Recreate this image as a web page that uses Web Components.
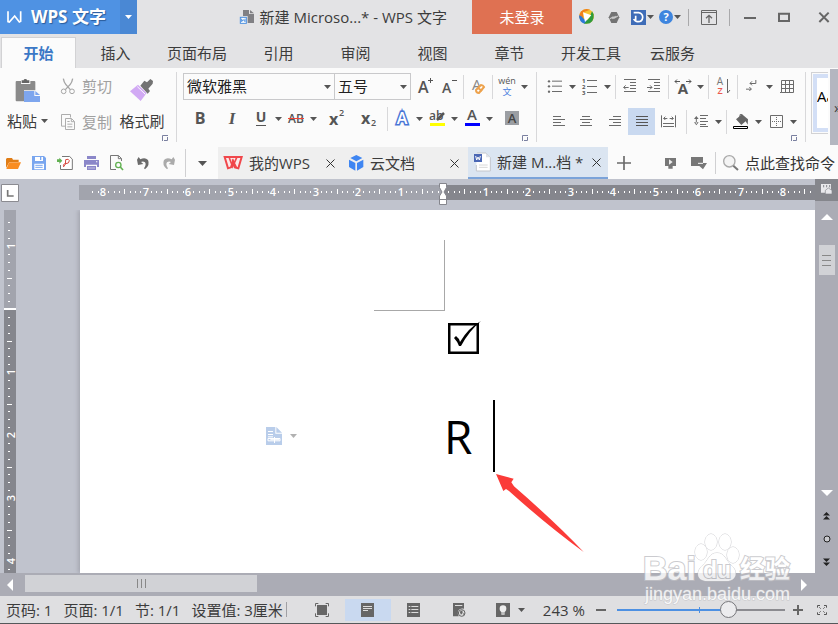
<!DOCTYPE html>
<html lang="zh-CN">
<head>
<meta charset="utf-8">
<title>WPS 文字</title>
<style>
html,body{margin:0;height:100%}
body{font:15px/20px "Open Sans","Noto Sans CJK SC",sans-serif;color:#3c3c3c;overflow:hidden}
</style>
</head>
<body>
<wps-app></wps-app>
<script>
// Shared base: puts a style and a markup string into an open shadow root.
class Base extends HTMLElement{
  constructor(){super();this.attachShadow({mode:'open'})}
  connectedCallback(){this.render()}
  paint(css,html){
    const t=document.createElement('template');
    t.innerHTML=`<style>*{box-sizing:border-box}button{font:inherit;color:inherit;background:none;border:0;padding:0;margin:0}${css}</style>${html}`;
    this.shadowRoot.replaceChildren(t.content.cloneNode(true));
  }
}

// Icons: [x, y, width, height, units per pixel, body]
const G='#6b6b6b';
const T=(x,y,s,t,o='')=>`<text x="${x}" y="${y}" font-size="${s}" ${o}>${t}</text>`;
const lines=(a,c=G)=>a.map(([x,y,w])=>`<path stroke="${c}" stroke-width="3" d="M${x} ${y}h${w}"/>`).join('');
const ICONS={
 arrow:[0,0,7,4,1,`<path fill="#555" d="M0 0h7L3.500 4z"/>`],
 arrowW:[0,0,7,4,1,`<path fill="#fff" d="M0 0h7L3.500 4z"/>`],
 arrowBig:[0,0,9,5,1,`<path fill="#555" d="M0 0h9L4.500 5z"/>`],
 launcher:[486,408,18,18,3,`<path fill="none" stroke="#7a80a0" stroke-width="3" d="M487.500 426V409.500H504M502.500 414V424.500H492"/>`],
 logo:[20,27,48,42,3,`<path fill="none" stroke="#fff" stroke-width="5" d="M23 31V62L27 63L43 45L57 63L61 61V31"/>`],
 doc:[702,24,48,48,3,`<path fill="#808084" d="M714 27h18v12h15v27H728V45H714z"/><path fill="#808084" d="M735 27l12 10h-12z"/><rect x="706" y="49" width="18" height="18" fill="#fff" stroke="#4a8fe0" stroke-width="3"/><path fill="none" stroke="#4a8fe0" stroke-width="3" d="M710 53v9l5-6 5 6v-9"/>`],
 ball:[114,27,51,48,3,`<circle cx="140" cy="49" r="22" fill="#f7c331"/><path fill="#f0801d" d="M140 27a22 22 0 0 0-22 26l12 4V37l20-8z"/><path fill="#2a78d8" d="M117 46q0 20 16 25l12-8-13-6-8-8z"/><path fill="#2e9b3c" d="M132 71q32 4 29-28l-5-9-8 19z"/><path fill="#fff" d="M129 37l25 9-19 20z"/>`],
 hex:[204,30,36,39,3,`<path fill="#737373" d="M214 33h16l8 16-8 17h-16l-8-17z"/><path stroke="#c9c9c9" stroke-width="3.500" fill="none" d="M210 53l9-5 4 3 11-6M217 53l10-7"/>`],
 dee:[273,27,45,45,3,`<rect x="273" y="27" width="45" height="45" fill="#3f6db8"/><path fill="none" stroke="#fff" stroke-width="5" d="M287 44v18M281 35h15c18 2 15 28-3 27-8 0-10-4-12-8"/>`],
 help:[0,0,14,14,1,`<circle cx="7" cy="7" r="7" fill="#3e85de"/>${T(7,11,11,'?','fill="#fff" text-anchor="middle" font-weight="700"')}`],
 ribbonUp:[480,27,48,45,3,`<path fill="none" stroke="#666" stroke-width="3" d="M481.500 28.500h45v42h-45zM481 34.500h45"/><path fill="none" stroke="#666" stroke-width="4" d="M504 66V44M495 52l9-9 9 9"/>`],
 min:[612,36,36,36,3,`<path stroke="#666" stroke-width="6" d="M612 57h36"/>`],
 max:[714,36,36,30,3,`<path stroke="#666" fill="none" stroke-width="6" d="M717 41h30v22h-30z"/>`],
 close:[834,36,36,33,3,`<path stroke="#666" stroke-width="6" d="M838 38l28 28M866 38l-28 28"/>`],
 paste:[48,240,72,69,3,`<path fill="#8a8a8a" d="M50 246h13v9h28v-9h12q3 0 3 3v25H72v33H50q-3 0-3-3v-55q0-3 3-3z"/><path fill="#666" d="M65 244h6q0-4 5-4t5 4h7v8H65z"/><path fill="#7ea6ee" d="M72 276h31v15h17v18H72z"/><path fill="#7ea6ee" d="M106 276l14 12h-14z"/>`],
 cut:[183,231,42,51,3,`<path stroke="#a5a5a5" stroke-width="4" fill="none" d="M190 233q2 12 8 18l13 15M218 233q-2 12-8 18l-14 15"/><circle cx="191" cy="271" r="7" fill="none" stroke="#a5a5a5" stroke-width="3"/><circle cx="216" cy="271" r="7" fill="none" stroke="#a5a5a5" stroke-width="3"/>`],
 copy:[183,339,42,48,3,`<path stroke="#adadad" stroke-width="3" fill="none" d="M195 375.500H184.500V340.500h27v9M196.500 352.500h18l9 9v24h-27zM214 353v9h9M202 361.500h7M202 369.500h15M202 377.500h15"/>`],
 brush:[390,237,72,69,3,`<path fill="#737373" d="M433 242l8 5 10-10 8 6-1 8-13 15 5 7-7 8-22-24z"/><path fill="#d1a9f4" d="M414 254l26 25-18 24-32-29z"/><path stroke="#fbfbfb" stroke-width="3" d="M424 304l9-11M412 260l24 23"/>`],
 bold:[0,0,20,19,1,T(10,15,16,'B','text-anchor="middle" font-weight="700"')],
 italic:[0,0,20,19,1,T(10,15,17,'I','text-anchor="middle" font-style="italic" font-weight="700" font-family="Liberation Serif"')],
 under:[0,0,20,19,1,T(10,13,14,'U','text-anchor="middle" font-weight="700"')+`<path stroke="#555" stroke-width="1" d="M5 16.500h10"/>`],
 strike:[0,0,20,19,1,T(10,14,12,'AB','text-anchor="middle" font-weight="600"')+`<path stroke="#f0443a" d="M2 9.500h16"/>`],
 sup:[0,0,20,21,1,T(3,17,16,'x','font-weight="700"')+T(13,8,9,'2','font-weight="600"')],
 sub:[0,0,20,21,1,T(3,16,16,'x','font-weight="700"')+T(13,18,9,'2','font-weight="600"')],
 grow:[0,0,20,21,1,T(3,17,16,'A','font-weight="600"')+`<path stroke="#555" d="M13 4.500h5M15.500 2v5"/>`],
 shrink:[0,0,20,21,1,T(3,17,14,'A','font-weight="600"')+`<path stroke="#555" d="M13 4.500h5"/>`],
 erase:[0,0,18,19,1,T(3,13,15,'A','fill="#888"')+`<path fill="#fff" stroke="#eda24c" stroke-width="2" d="M7 13l5-5q2 0 3 2l-5 6q-3 0-3-3z"/><path stroke="#eda24c" stroke-width="2" d="M9 11l4 3"/>`],
 wen:[0,0,20,21,1,T(10,8,9,'wén','text-anchor="middle"')+T(10,19,9,'文','text-anchor="middle" fill="#4a82e0"')],
 outlineA:[0,0,20,21,1,T(10,16,16,'A','text-anchor="middle" font-weight="600" fill="#fff" stroke="#4a76d6" stroke-width="3" paint-order="stroke"')],
 hilite:[0,0,20,21,1,T(2,12,12,'ab','font-weight="600"')+`<path stroke="#555" stroke-width="2.500" d="M10 12l7-7"/><path fill="#ff0" d="M3 15h15v3H3z"/>`],
 color:[0,0,20,21,1,T(10,12,15,'A','text-anchor="middle" font-weight="600"')+`<path fill="#00f" d="M3 15h15v3H3z"/>`],
 shade:[0,0,14,15,1,`<rect width="14" height="14" fill="#9b9ea3"/>`+T(7,12,13,'A','text-anchor="middle" font-weight="600" fill="#444"')],
 bullets:[24,240,42,45,3,[246,261,277].map(y=>`<circle cx="27" cy="${y+1}" r="3.500" fill="${G}"/>`).join('')+lines([[36,246.500,30],[36,261.500,30],[36,277.500,30]])],
 numbers:[0,0,16,17,1,T(0,5,6,'1','font-weight="700"')+T(0,11,6,'2','font-weight="700"')+T(0,17,6,'3','font-weight="700"')+`<path stroke="${G}" d="M5 2.500h10M5 8.500h10M5 14.500h10"/>`],
 outdent:[249,240,42,45,3,lines([[252,241.500,36],[270,250.500,18],[270,259.500,18],[270,268.500,18],[252,277.500,36]])+`<path stroke="${G}" stroke-width="3" fill="none" d="M266 265.500H251M257 259l-6 6 6 6"/>`],
 indent:[321,240,42,45,3,lines([[324,241.500,36],[342,250.500,18],[342,259.500,18],[342,268.500,18],[324,277.500,36]])+`<path stroke="${G}" stroke-width="3" fill="none" d="M321 265.500h15M330 259l6 6-6 6"/>`],
 textA:[0,0,18,19,1,T(9,17,15,'A','text-anchor="middle" font-weight="700"')+`<path fill="none" stroke="#555" d="M1 4.500h5M3 2.500l-2 2 2 2M12 4.500h5M15 2.500l2 2-2 2"/>`],
 sort:[0,0,18,21,1,T(6,9,10,'A','text-anchor="middle" fill="#777"')+T(6,18,9,'Z','text-anchor="middle" fill="#ec5a50" font-weight="600"')+`<path stroke="#666" fill="none" d="M13.500 3v14M16 14l-2.500 3"/>`],
 marks:[621,237,36,45,3,`<path stroke="${G}" stroke-width="3" fill="none" d="M650.500 240v10.500H633M639 244l-6 6 6 6M621 267.500h16M631 261l6 6-6 6"/>`],
 tgrid:[720,237,45,45,3,`<path stroke="${G}" stroke-width="3" fill="none" d="M724.500 277.500V241.500H760.500V277.500H724M736.500 241v36M748.500 241v36M724 253.500h36M724 265.500h36M720 277.500h4"/>`],
 left:[36,348,36,39,3,lines([[36,352.500,24],[36,361.500,36],[36,370.500,24],[36,379.500,36]])],
 center:[120,348,36,39,3,lines([[126,352.500,24],[120,361.500,36],[126,370.500,24],[120,379.500,36]])],
 right:[207,348,36,39,3,lines([[219,352.500,24],[207,361.500,36],[219,370.500,24],[207,379.500,36]])],
 justify:[285,348,36,39,3,lines([[285,352.500,36],[285,361.500,36],[285,370.500,36],[285,379.500,36]],'#555')],
 spread:[360,345,45,39,3,lines([[366,370.500,33],[366,379.500,33]])+`<path stroke="${G}" stroke-width="3" fill="none" d="M361.500 346v36M403.500 346v36M368 355.500h11M386 355.500h11M373 350l-5 5 5 5M392 350l5 5-5 5"/>`],
 spacing:[462,345,45,45,3,lines([[480,349.500,24],[480,358.500,18],[480,367.500,24],[480,376.500,18],[480,382.500,24]])+`<path fill="${G}" d="M462 360l7-9 7 9zM462 370l7 9 7-9zM467.500 356h3v18h-3z"/>`],
 fill:[579,342,48,45,3,`<path fill="#666" d="M588 358l18-15 18 15-1 16-6-10-13 11z"/><path fill="none" stroke="#666" stroke-width="3" d="M600 354v-10h6v8"/><path fill="#fff" stroke="#000" stroke-width="3" d="M580.500 379.500h42v6h-42z"/>`],
 border:[687,345,39,39,3,`<path stroke="${G}" stroke-width="3" fill="none" d="M688.500 346.500h36v36h-36z"/><path stroke="${G}" stroke-width="3" stroke-dasharray="3 3" d="M693 364.500h30M706.500 351v30"/>`],
 open:[15,36,45,39,3,`<path fill="#e07d16" d="M15 69V42l3-3h15l3 5h17v7H25z"/><path fill="#f98d22" d="M24 52h36l-9 20H16z"/>`],
 save:[96,33,42,42,3,`<path fill="#79a6ef" d="M96 33h36l6 6v36H96z"/><path fill="#fff" d="M105 36h24v12h-24zM103 56h29v17h-29z"/><path fill="#79a6ef" d="M120 36h4v9h-4z"/><path stroke="#79a6ef" stroke-width="3" d="M106 61h22M106 67h22"/>`],
 pdf:[171,33,48,42,3,`<path fill="#fff" stroke="#777" stroke-width="3" d="M186 34.500h23l8 8v31H181.500V60"/><path fill="#62b152" d="M171 43h7v-5l9 9-9 9v-5h-7z"/><path fill="none" stroke="#d8483e" stroke-width="3" d="M190 66q9-6 7-22 9-4 11 3 0 9-11 9-9 0-6 9"/>`],
 print:[249,33,45,42,3,`<path fill="#8b87c9" d="M258 33h27v9h-27zM249 45h45v21h-6v-7h-33v7h-6zM258 63h27v12h-27z"/><path fill="#fff" d="M285 49h4v3h-4zM261 68h21v2h-21z"/>`],
 preview:[330,30,42,48,3,`<path fill="none" stroke="#777" stroke-width="3" d="M348 73.500H331.500V31.500h24l9 9V48M355 32v9h9"/><circle cx="355" cy="60" r="8" fill="none" stroke="#62b152" stroke-width="4"/><path stroke="#62b152" stroke-width="5" d="M361 66l8 9"/>`],
 undo:[411,36,36,39,3,`<path fill="#6b6b6b" d="M411 44l5-8 5 7q14-8 23 2 7 15-9 28l-3-3q8-12 3-18-6-5-12-1l7 6-16 3z"/>`],
 redo:[489,36,36,39,3,`<path fill="#ababab" d="M525 44l-5-8-5 7q-14-8-23 2-7 15 9 28l3-3q-8-12-3-18 6-5 12-1l-7 6 16 3z"/>`],
 wps:[669,30,60,42,3,`<path fill="#fbeaea" stroke="#f0474b" stroke-width="6" d="M674 33h51l-10 34-10-3-6-18-6 18-9 3z"/><path fill="none" stroke="#f0474b" stroke-width="5" d="M688 36l10 26 12-27M697 40l13 26"/>`],
 cube:[243,27,45,48,3,`<path fill="#3f86f2" d="M265 27l18 9-18 10-18-10zM243 41l19 10v23l-19-11zM286 41l-19 10v23l19-11z"/>`],
 wdoc:[612,21,54,60,3,`<path fill="#fff" stroke="#c3c6cc" stroke-width="3" d="M624 24h27l13 13v41H622V60"/><path fill="#dfe2e8" d="M651 24v13h13z"/><rect x="615" y="27" width="24" height="24" fill="#4a67b5"/><path fill="none" stroke="#fff" stroke-width="3" d="M620 33l3 12 4-9 4 9 3-12"/><path stroke="#d8d8d8" stroke-width="3" d="M630 60h26M630 67h26"/>`],
 x:[0,0,9,9,1,`<path stroke="#333" d="M.5.5l8 8M8.500.5l-8 8"/>`],
 plus:[231,33,42,42,3,`<path stroke="#6b6b6b" stroke-width="5" d="M231 54h42M252 33v42"/>`],
 monitor:[375,33,36,39,3,`<path fill="#777" d="M375 36h33v24h-33zM385 60h13v8h-13z"/><path fill="#eee" d="M387 40l11 8-11 8z"/>`],
 boxdown:[453,33,48,39,3,`<path fill="#777" d="M453 33h36v18h12L489 70 478 60h-25z"/><path stroke="#fbfbfb" stroke-width="3" d="M474 52h15"/>`],
 search:[549,30,48,48,3,`<circle cx="568" cy="49" r="17" fill="#f4f4f4" stroke="#a9a9a9" stroke-width="4"/><path stroke="#777" stroke-width="6" d="M580 62l14 13"/>`],
 tabstop:[4,117,54,54,3,`<path fill="#fff" stroke="#8b8b91" stroke-width="3" d="M5.500 118.500h51v51h-51z"/><path fill="none" stroke="#777" stroke-width="5" d="M24 135v18h18"/>`],
 viewswitch:[840,120,36,36,3,`<path fill="#e9e9ec" d="M840 120h30v18h-15v8h-15z"/><path stroke="#85868c" stroke-width="3" d="M848 123v7M857 123v7M866 123v7"/><path fill="#e9e9ec" stroke="#85868c" stroke-width="2" d="M853 139l9-7 11 7v11h-20z"/>`],
 up:[0,0,12,6,1,`<path fill="#fff" d="M6 0l6 6H0z"/>`],
 down:[0,0,12,6,1,`<path fill="#fff" d="M6 6l6-6H0z"/>`],
 lt:[0,0,6,12,1,`<path fill="#fff" d="M0 6l6-6v12z"/>`],
 rt:[0,0,6,12,1,`<path fill="#fff" d="M6 6L0 0v12z"/>`],
 pgup:[0,0,7,8,1,`<path fill="#222" d="M3.500 0L7 3.500H0zM3.500 4L7 7.500H0z"/>`],
 pgdn:[0,0,7,8,1,`<path fill="#222" d="M3.500 4L7 .5H0zM3.500 8L7 4.500H0z"/>`],
 dot:[0,0,8,8,1,`<circle cx="4" cy="4" r="3" fill="#c9c9cd" stroke="#222"/>`],
 full:[75,126,42,42,3,`<path fill="#666" d="M81 132h30v30H81z"/><path fill="none" stroke="#666" stroke-width="3" d="M76.500 136v-8.500H85M107 127.500h8.500V136M76.500 157v9.500H85M107 166.500h8.500V157"/>`],
 printv:[216,126,39,42,3,`<path fill="#666" d="M216 126h39v42h-39z"/><path stroke="#ddd" stroke-width="3" d="M222 136.500h27M222 142.500h27M222 148.500h15"/>`],
 listv:[354,126,39,42,3,`<path fill="#666" d="M354 126h39v42h-39z"/><path stroke="#ddd" stroke-width="3" d="M359 136.500h5M359 145.500h5M359 154.500h5M367 136.500h21M367 145.500h21M367 154.500h21"/>`],
 webv:[492,126,39,42,3,`<path fill="#666" d="M492 126h33v17q-14-2-18 8-2 9 2 15h-17z"/><path stroke="#ddd" stroke-width="3" d="M498 133.500h22"/><circle cx="518" cy="156" r="10" fill="#ddd" stroke="#666" stroke-width="3"/><path fill="#666" d="M512 152l8-4 1 8-5 5zM522 158l5-3-3 8z"/>`],
 eye:[627,126,42,42,3,`<path fill="#666" d="M627 126h42v42h-42z"/><circle cx="648" cy="143" r="10" fill="#eee"/><path fill="#eee" d="M643 150h10v11h-10z"/><path stroke="#666" stroke-width="2" d="M643 156h10"/>`],
 minus:[0,0,10,10,1,`<path fill="#666" d="M0 4h10v2H0z"/>`],
 add:[0,0,10,10,1,`<path fill="#666" d="M0 4h10v2H0zM4 0h2v10H4z"/>`],
 expand:[768,372,30,30,3,`<path fill="none" stroke="#555" stroke-width="3" d="M769.500 380v-6.500H777M789 373.500h7.500V380M769.500 394v6.500H777M789 400.500h7.500V394M775 379l4 4M791 379l-4 4M775 395l4-4M791 395l-4-4"/>`],
 para:[48,351,48,54,3,`<path fill="#b9cdea" d="M48 351h28v20h20v34H48z"/><path fill="#b9cdea" d="M79 351l17 17H79z"/><path stroke="#fff" stroke-width="3" fill="none" d="M54 364.500h15M54 373.500h15M54 380.500h15M54 385.500h36v7H54z"/><path stroke="#fff" stroke-width="3" d="M73.500 381v18M61 389h27"/>`]
};
customElements.define('wps-icon',class extends Base{
  render(){
    const [x,y,w,h,u,b]=ICONS[this.getAttribute('name')];
    this.paint(`:host{display:block;flex:none}svg{display:block;overflow:visible;fill:#555;font-family:"Open Sans","Noto Sans CJK SC",sans-serif}`,
      `<svg aria-hidden="true" width="${w/u}" height="${h/u}" viewBox="${x} ${y} ${w} ${h}">${b}</svg>`);
  }
});
const I=n=>`<wps-icon name="${n}"></wps-icon>`;

// Icon button with an optional drop-down arrow.
customElements.define('tool-button',class extends Base{
  render(){
    const l=this.getAttribute('label');
    this.paint(`:host{display:flex;height:27px;flex:none}button{display:grid;place-items:center;width:24px}
      :host([wide]) .m{width:27px}:host([on]) .m{background:#c9d9f0}.d{width:11px}`,
      `<button class="m" aria-label="${l}">${I(this.getAttribute('icon'))}</button>`+
      (this.hasAttribute('menu')?`<button class="d" aria-label="${l}选项">${I('arrow')}</button>`:''));
  }
});
const B=(i,l,o='')=>`<tool-button icon="${i}" label="${l}" ${o}></tool-button>`;

customElements.define('title-bar',class extends Base{
  render(){
    this.paint(`:host{display:flex;height:34px;background:#e3e3e5;align-items:stretch}
      .brand{display:flex;align-items:center;width:120px;padding-left:7px;gap:8px;background:#4f92e3;color:#fff;font-size:17px;font-weight:700;text-shadow:1px 1px 1px #2a5c9c;white-space:nowrap}
      .drop{width:17px;background:#4a88d4;display:grid;place-items:center}
      .title{flex:1;display:flex;align-items:center;justify-content:flex-end;gap:5px;padding-right:25px;white-space:nowrap}
      .login{width:100px;background:#df7152;color:#fff}
      .tools{display:flex;align-items:center;width:266px}
      .tools button{display:flex;align-items:center;justify-content:center;gap:1px;width:28px;height:34px}
      .tools .w{width:28px}.tools .r{width:40px}.tools .e{padding-left:12px}
      i{width:1px;height:17px;background:#a9a9ab}.sp{flex:1}`,
      `<button class="brand">${I('logo')}<span>WPS 文字</span></button><button class="drop" aria-label="菜单">${I('arrowW')}</button>
      <div class="title">${I('doc')}<span>新建 Microso...* - WPS 文字</span></div>
      <button class="login">未登录</button>
      <div class="tools"><button aria-label="浏览器">${I('ball')}</button><button aria-label="皮肤">${I('hex')}</button>
      <button class="w" aria-label="文档">${I('dee')}${I('arrow')}</button><button class="w" aria-label="帮助">${I('help')}${I('arrow')}</button><span class="sp"></span><i></i>
      <button class="r" aria-label="功能区">${I('ribbonUp')}</button><i></i><button class="r" aria-label="最小化">${I('min')}</button><button aria-label="最大化">${I('max')}</button><button class="r e" aria-label="关闭">${I('close')}</button></div>`);
  }
});

customElements.define('menu-tabs',class extends Base{
  render(){
    const t=['插入','页面布局','引用','审阅','视图','章节','开发工具','云服务'];
    this.paint(`:host{display:flex;height:34px;background:#e3e3e5;padding-left:1px;align-items:flex-end}
      button{width:77px;height:31px;padding-top:1px}.wide{width:86px}
      .on{width:75px;margin-right:1px;background:#fbfbfb;border:1px solid #d2d2d4;border-bottom:0;color:#3b78c6;font-weight:600;padding:0 0 1px}`,
      `<button class="on">开始</button>`+t.map(x=>`<button class="${x.length>3?'wide':''}">${x}</button>`).join(''));
  }
});

customElements.define('ribbon-group',class extends Base{
  render(){
    this.paint(`:host{display:flex;flex-direction:column;height:70px;flex:none;border-right:1px solid #d8d8da}
      .body{height:63px}.l{align-self:flex-end;margin-right:8px;display:block}`,
      `<div class="body"><slot></slot></div><button class="l" aria-label="更多设置">${I('launcher')}</button>`);
  }
});

customElements.define('combo-box',class extends Base{
  render(){
    this.paint(`:host{display:grid;height:27px;align-items:center}
      select,wps-icon{grid-area:1/1}select{appearance:none;font:inherit;color:#222;width:100%;height:27px;border:1px solid #c9c9cb;border-radius:0;background:#fbfbfb;padding:0 0 2px 3px}
      wps-icon{justify-self:end;margin-right:4px;pointer-events:none}`,
      `<select aria-label="${this.getAttribute('label')}"><option>${this.getAttribute('value')}</option></select>${I('arrow')}`);
  }
});

customElements.define('ribbon-bar',class extends Base{
  render(){
    const s='<i></i>';
    this.paint(`:host{display:flex;height:79px;background:#fbfbfb;padding-top:4px;overflow:hidden}
      .clip{display:grid;grid-template-columns:53px 61px 54px;column-gap:0;padding-left:1px;height:63px;width:176px}
      .clip button{white-space:nowrap}
      .big{display:flex;flex-direction:column;align-items:center;justify-content:space-between;padding:7px 0 4px;height:63px}
      .big span{display:flex;align-items:center;gap:4px}
      .small{display:flex;flex-direction:column;gap:8px;padding-left:7px;color:#a0a0a0}
      .small button{display:flex;align-items:center;gap:7px;height:28px}
      .row{display:flex;height:27px;margin-top:1px}.row+.row{margin-top:5px}.para .row+.row{margin-top:8px}
      .font{width:359px;padding-left:6px}.font .row+.row{padding-left:5px}
      .para{width:268px;padding-left:6px}.para .row+.row{padding-left:2px}
      combo-box.f{width:152px}combo-box.s{width:77px;margin-left:-1px}
      .row i{width:1px;height:24px;margin:2px;background:#d8d8da;flex:none}
      .g2{margin-left:2px}.g5{margin-left:5px}.g8{margin-left:8px}
      .gal{flex:1;min-width:17px;height:62px;margin-left:5px;border:1px solid #d2d2d4;border-right:0;padding:1px 0 1px 1px;overflow:hidden}
      .gal button{display:block;width:100%;height:58px;border:4px solid #d3dff6;border-right:0;background:#fff;color:#000;text-align:left;padding-bottom:14px;overflow:hidden}
      .more{width:8px;height:76px;margin:-3px 0 0 2px;background:#b4b6c0;overflow:hidden;text-align:left;padding-left:4px}`,
      `<ribbon-group><div class="clip"><button class="big">${I('paste')}<span>粘贴${I('arrow')}</span></button>
        <div class="small"><button disabled>${I('cut')}剪切</button><button disabled>${I('copy')}复制</button></div>
        <button class="big">${I('brush')}<span>格式刷</span></button></div></ribbon-group>
      <ribbon-group><div class="font"><div class="row"><combo-box class="f" label="字体" value="微软雅黑"></combo-box><combo-box class="s" label="字号" value="五号"></combo-box>
        <span class="g2"></span>${B('grow','增大字号')}${B('shrink','减小字号')}${s}${B('erase','清除格式')}${s}${B('wen','拼音指南','menu')}</div>
        <div class="row">${B('bold','加粗')}${B('italic','倾斜','class="g8"')}${B('under','下划线','menu class="g5"')}${B('strike','删除线','menu')}${B('sup','上标','class="g5"')}${B('sub','下标','class="g8"')}<span class="g5"></span>${s}
        ${B('outlineA','文字效果','menu')}${B('hilite','突出显示','menu')}${B('color','字体颜色','menu')}${B('shade','字符底纹','class="g5"')}</div></div></ribbon-group>
      <ribbon-group><div class="para"><div class="row">${B('bullets','项目符号','menu')}${B('numbers','编号','menu')}${s}${B('outdent','减少缩进')}${B('indent','增加缩进')}${s}${B('textA','中文版式','menu')}${s}${B('sort','排序')}${s}${B('marks','显示标记','menu')}${B('tgrid','制表位')}</div>
        <div class="row">${B('left','左对齐','wide')}${B('center','居中','wide')}${B('right','右对齐','wide class="g2"')}${B('justify','两端对齐','wide on')}${B('spread','分散对齐','wide')}<span class="g2"></span>${s}${B('spacing','行距','menu')}${s}${B('fill','底纹颜色','menu')}${B('border','边框','menu')}</div></div></ribbon-group>
      <div class="gal"><button aria-label="样式">Aa</button></div><button class="more" aria-label="更多">»</button>`);
  }
});

customElements.define('document-tab',class extends Base{
  render(){
    this.paint(`:host{display:flex;align-items:center;height:32px;background:#efefef;padding:0 9px 0 5px;white-space:nowrap}
      :host([on]){background:#dbe5f1;border-bottom:2px solid #7ba3d9;padding-right:7px}
      .t{display:flex;align-items:center;gap:6px;flex:1;height:30px}`,
      `<button class="t">${I(this.getAttribute('icon'))}<span><slot></slot></span></button><button aria-label="关闭标签">${I('x')}</button>`);
  }
});
customElements.define('document-bar',class extends Base{
  render(){
    this.paint(`:host{display:flex;align-items:center;height:32px;background:#fbfbfb}
      .q{display:grid;place-items:center;width:26px;height:32px;flex:none}.d{width:32px}
      i{width:1px;height:22px;background:#d0d0d2;margin:0 2px}i.full{height:28px;margin:0 0 0 3px}
      .a{width:126px}.b{width:124px}.c{width:140px}.p{width:32px}.sp{flex:1}.r{width:28px}
      label{display:flex;align-items:center;gap:6px;padding-left:5px}
      input{font:inherit;width:93px;border:0;background:none;padding:0;color:#333}input::placeholder{color:#333;opacity:1}`,
      ['open:打开','save:保存','pdf:输出PDF','print:打印','preview:打印预览','undo:撤销','redo:恢复'].map(x=>{const[a,b]=x.split(':');return`<button class="q" aria-label="${b}">${I(a)}</button>`}).join('')+
      `<i class="full"></i><button class="q d" aria-label="自定义">${I('arrowBig')}</button>
      <document-tab class="a" icon="wps">我的WPS</document-tab><document-tab class="b" icon="cube">云文档</document-tab><document-tab class="c" icon="wdoc" on>新建 M...档 *</document-tab>
      <button class="q p" aria-label="新建">${I('plus')}</button><span class="sp"></span>
      <button class="q r" aria-label="播放">${I('monitor')}</button><button class="q r" aria-label="窗口">${I('boxdown')}</button><i></i>
      <label>${I('search')}<input aria-label="查找命令" placeholder="点此查找命令"></label>`);
  }
});

// Ruler: eighth-unit dots, half-unit bars and whole-unit numbers around a zero point.
customElements.define('page-ruler',class extends Base{
  render(){
    this.paint(`:host{display:block;min-height:0;min-width:0}svg{display:block;width:100%;height:100%;overflow:visible;fill:#fff;font-size:11px;font-family:"Open Sans",sans-serif;font-weight:600}`,'<svg aria-hidden="true"></svg>');
    this.draw();
    new ResizeObserver(()=>this.draw()).observe(this);
  }
  draw(){
    const v=this.hasAttribute('vertical'),r=this.getBoundingClientRect(),len=v?r.height:r.width;
    const z=+this.getAttribute('zero'),u=+this.getAttribute('unit')/8,from=+this.getAttribute('from'),rest=Math.max(0,len-z);
    let o=v?`<rect width="12" height="${z}" fill="#a2a4ad"/><rect y="${z}" width="12" height="${rest}" fill="#85868d"/><rect y="${z-1}" width="12" height="2"/>`
           :`<rect width="${z}" height="15" fill="#a2a4ad"/><rect x="${z}" width="${rest}" height="15" fill="#85868d"/>`;
    for(let k=from;z+k*u<len-2;k++){
      if(!k)continue;
      const p=Math.round(z+k*u);
      if(k%8===0)o+=v?`<text transform="translate(11 ${p}) rotate(-90)" text-anchor="middle">${Math.abs(k/8)}</text>`:`<text x="${p}" y="11" text-anchor="middle">${Math.abs(k/8)}</text>`;
      else if(k%4===0)o+=v?`<rect x="3" y="${p}" width="5" height="1"/>`:`<rect x="${p}" y="4" width="1" height="5"/>`;
      else o+=v?`<rect x="4" y="${p}" width="2" height="1"/>`:`<rect x="${p}" y="6" width="1" height="2"/>`;
    }
    this.shadowRoot.querySelector('svg').innerHTML=o;
  }
});

customElements.define('doc-page',class extends Base{
  render(){
    this.paint(`:host{display:block;position:relative;background:#fff;box-shadow:-2px 0 4px #a4a6b0;clip-path:inset(0 0 0 -8px);color:#000}
      .text{padding:111px 0 0 364px}.text svg{display:block;overflow:visible}
      p{display:flex;margin:46px 0 0;font-size:46px;line-height:72px}
      .caret{width:2px;height:72px;background:#000;margin-left:21px}
      .corner{position:absolute;left:294px;top:30px;width:71px;height:71px;border:solid #a8a8a8;border-width:0 1px 1px 0}
      .mark{position:absolute;left:186px;top:217px;display:flex;align-items:center;gap:8px}.mark svg{opacity:.5}
      .point{position:absolute;left:416px;top:264px}`,
      `<div class="corner"></div>
      <div class="text"><svg width="38" height="33" viewBox="1 0 38 33" role="img" aria-label="勾选框"><path fill="none" stroke="#000" stroke-width="2.500" d="M6.250 3.250h28.500v28.500H6.250z"/><path d="M11 17l2-2q3 2 4 6Q25 7 38 0 26 10 18 25h-2q-2-5-5-8z"/></svg>
      <p><span>R</span><span class="caret"></span></p></div>
      <button class="mark" aria-label="段落布局">${I('para')}<svg width="7" height="4"><path d="M0 0h7L3.500 4z" fill="#666"/></svg></button>
      <svg class="point" width="88" height="79" viewBox="738 492 264 237" aria-hidden="true"><path fill="#fb3b38" d="M738 492l53 14-7 11 8 12Q920 640 1001 726 890 645 777 543l-9-6-8 6z"/></svg>`);
  }
});

customElements.define('work-area',class extends Base{
  render(){
    this.paint(`:host{display:grid;grid-template:31px 1fr 23px/79px 1fr 23px;background:#c0c3cd;min-height:0}
      .stop{display:block;padding:5px 0 0 1px;justify-self:start;align-self:start}
      .h{position:relative}.h page-ruler{height:15px;margin-top:6px}
      .ind{position:absolute;left:359px;top:3px}
      .sw{background:#85868c;height:22px;display:grid;place-items:center;width:23px}
      .corner{background:#abacb5}
      .v{width:12px;margin-left:4px}
      doc-page{margin-left:1px;min-height:0}
      .vs{background:#abacb5;display:flex;flex-direction:column;align-items:center}
      .vs button,.hs button{display:grid;place-items:center}
      .vs .b{width:23px;height:23px;flex:none}.vs .th{width:16px;height:30px;background:#d1d2d6;margin:20px 0 auto;align-content:center;gap:4px}
      .th b{width:9px;height:1px;background:#888}
      .vs .up{padding-top:6px;margin-top:-8px}
      .hs{grid-column:1/4;background:#abacb5;display:flex;align-items:center}
      .hs .b{width:19px;height:22px}.hs .bar{width:232px;height:17px;background:#d1d2d6;margin:0 auto 2px 6px;grid-auto-flow:column;justify-content:center;gap:3px}
      .bar b{width:1px;height:9px;background:#888}.hs .e{margin-right:25px}`,
      `<button class="stop" aria-label="制表符">${I('tabstop')}</button>
      <div class="h"><page-ruler zero="364" unit="42.5" from="-66"></page-ruler><svg class="ind" width="10" height="24" aria-hidden="true"><path fill="#fff" stroke="#85868d" d="M1.500 1.500h7v4L6 10l2.500 4v8.500h-7V14L4 10 1.500 5.500z"/><path stroke="#85868d" d="M1 17.500h8"/></svg></div>
      <div class="corner"><button class="sw" aria-label="标尺">${I('viewswitch')}</button></div>
      <page-ruler class="v" vertical zero="99" unit="63" from="-11"></page-ruler>
      <doc-page></doc-page>
      <div class="vs"><button class="b up" aria-label="向上">${I('up')}</button><button class="th" aria-label="滚动"><b></b><b></b><b></b></button>
      <button class="b" aria-label="向下">${I('down')}</button><button class="b" aria-label="上一页">${I('pgup')}</button><button class="b" aria-label="选择">${I('dot')}</button><button class="b" aria-label="下一页">${I('pgdn')}</button></div>
      <div class="hs"><button class="b" aria-label="向左">${I('lt')}</button><button class="bar" aria-label="水平滚动"><b></b><b></b><b></b></button><button class="b e" aria-label="向右">${I('rt')}</button></div>`);
  }
});

customElements.define('status-bar',class extends Base{
  render(){
    this.paint(`:host{display:flex;align-items:center;height:28px;background:#dfdfe1;border-bottom:1px solid #55585a;white-space:nowrap;padding-right:4px}
      .info{display:flex;gap:11px;padding-left:6px}i{width:1px;height:15px;background:#a0a0a4;margin-left:3px}
      .views{display:flex;margin-left:12px;flex:none}.views button{display:flex;align-items:center;justify-content:center;gap:8px;width:46px;height:22px}
      .views .on{background:#c9d9f0}.views .w{width:56px}
      .zoom{margin-left:4px}.sp{flex:1}
      .k{display:grid;place-items:center;width:24px;height:24px;flex:none}
      .s{position:relative;display:flex;width:168px;margin:0 1px 0 4px}
      .s::before{content:"";position:absolute;left:82px;top:6px;width:1px;height:6px;background:#4d90e2}
      input{appearance:none;width:100%;height:18px;margin:0;background:linear-gradient(90deg,#4d90e2 66%,#8b8b90 66%) center/100% 2px no-repeat}
      input::-webkit-slider-thumb{appearance:none;width:17px;height:17px;border-radius:50%;background:#ececee;border:1px solid #77777b}`,
      `<div class="info"><span>页码: 1</span><span>页面: 1/1</span><span>节: 1/1</span><span>设置值: 3厘米</span></div><i></i>
      <div class="views"><button aria-label="全屏显示">${I('full')}</button><button class="on" aria-label="页面视图">${I('printv')}</button><button aria-label="大纲视图">${I('listv')}</button><button aria-label="网页视图">${I('webv')}</button><button class="w" aria-label="护眼模式">${I('eye')}${I('arrow')}</button></div>
      <span class="zoom">243 %</span><span class="sp"></span><button class="k" aria-label="缩小">${I('minus')}</button>
      <div class="s"><input type="range" min="0" max="100" value="68" aria-label="缩放比例"></div>
      <button class="k" aria-label="放大">${I('add')}</button><button class="k" aria-label="适合窗口">${I('expand')}</button>`);
  }
});

customElements.define('water-mark',class extends Base{
  render(){
    this.paint(`:host{position:absolute;right:41px;bottom:17px;pointer-events:none;opacity:.8}
      svg{display:block;fill:#fff;stroke:#bfbfc4;stroke-width:2;paint-order:stroke;font-family:"Liberation Sans","Noto Sans CJK SC",sans-serif}`,
      `<svg width="154" height="74" viewBox="0 0 154 74"><text x="0" y="47" font-size="34" font-weight="700">Bai</text>
      <g stroke-width="1"><ellipse cx="58" cy="19" rx="6" ry="8"/><ellipse cx="68" cy="9" rx="6" ry="8"/><ellipse cx="82" cy="9" rx="6" ry="8"/><ellipse cx="90" cy="22" rx="6" ry="8"/>
      <path d="M74 20c8 0 9 8 14 12 8 7 5 16-4 16H64c-10 0-12-9-4-16 5-4 6-12 14-12z"/></g>
      <text x="74" y="45" font-size="23" font-weight="700" text-anchor="middle">du</text>
      <text x="97" y="45" font-size="25" font-weight="700">经验</text>
      <text x="2" y="67" font-size="18" stroke-width="1">jingyan.baidu.com</text></svg>`);
  }
});

customElements.define('wps-app',class extends Base{
  render(){
    this.paint(`:host{display:flex;flex-direction:column;height:100vh;position:relative;overflow:hidden}
      title-bar,menu-tabs,ribbon-bar,document-bar,status-bar{flex:none}work-area{flex:1}`,
      `<title-bar></title-bar><menu-tabs></menu-tabs><ribbon-bar></ribbon-bar><document-bar></document-bar><work-area></work-area><status-bar></status-bar><water-mark></water-mark>`);
  }
});
</script>
</body>
</html>
